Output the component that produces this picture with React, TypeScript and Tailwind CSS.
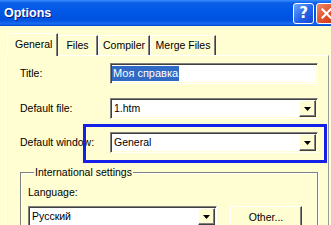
import React from "react";

const FACE = "bg-[#FFFDD2]";

function Arrow() {
  return (
    <svg width="7" height="4" viewBox="0 0 7 4" className="block">
      <path d="M0 0H7L3.5 4Z" fill="#000" />
    </svg>
  );
}

function Combo({ text, className }: { text: string; className: string }) {
  return (
    <div
      className={`${className} h-[21px] flex items-center bg-white border border-t-[#808080] border-l-[#808080] border-b-white border-r-white shadow-[inset_1px_1px_0_#404040,inset_-1px_-1px_0_#FFFDD2] pl-[2px] pr-px`}
    >
      <span className="flex-1 leading-[13px] pl-px">{text}</span>
      <div
        className={`w-[17px] h-[17px] ${FACE} flex items-center justify-center border border-t-white border-l-white border-b-[#404040] border-r-[#404040] shadow-[inset_-1px_-1px_0_#808080]`}
      >
        <Arrow />
      </div>
    </div>
  );
}

function Label({ children }: { children: React.ReactNode }) {
  return <div className="w-[90px] shrink-0 leading-[13px] whitespace-nowrap">{children}</div>;
}

export default function App() {
  return (
    <div
      className={`w-[331px] h-[225px] overflow-hidden ${FACE} font-['Liberation_Sans',Arial,sans-serif] text-[10.5px] text-black`}
    >
      <div className="w-[345px]">
        {/* Title bar */}
        <div className="h-[26px] flex items-center pl-[4px] pr-[8px] bg-[linear-gradient(to_bottom,#3a8cff_0px,#0a5ee8_3px,#0057e6_12px,#0052df_20px,#1a6cf2_24px,#0040c8_26px)]">
          <div className="flex-1 text-white font-bold text-[12.5px] leading-[16px] [text-shadow:1px_1px_0_#0a1a80]">
            Options
          </div>
          <div className="flex items-center gap-[2px]">
            <div className="w-[21px] h-[21px] rounded-[3px] border border-white bg-[linear-gradient(135deg,#6aa6ff,#2462ea_55%,#1448d0)] flex items-center justify-center text-white font-bold text-[15px] leading-none font-['DejaVu_Sans',sans-serif]">
              ?
            </div>
            <div className="w-[21px] h-[21px] rounded-[3px] border border-white bg-[linear-gradient(135deg,#f08a6a,#e0502c_55%,#c23a18)] flex items-center justify-center">
              <svg width="11" height="11" viewBox="0 0 11 11">
                <path d="M1.5 1.5L9.5 9.5M9.5 1.5L1.5 9.5" stroke="#fff" strokeWidth="2.2" strokeLinecap="square" />
              </svg>
            </div>
          </div>
        </div>

        <div className="pl-[5px] pt-[7px]">
          {/* Tabs */}
          <div className="flex items-end h-[22px] ml-[2px]">
            <div
              className={`relative z-10 -mb-px h-[23px] w-[51px] ${FACE} border-l border-t border-l-white border-t-white border-r border-r-[#404040] shadow-[inset_-1px_0_0_#808080] rounded-tl-[2px] pl-[7px] pt-[4px] leading-[13px]`}
            >
              General
            </div>
            <div className="h-[20px] w-[40px] border-t border-t-white border-r border-r-[#404040] shadow-[inset_-1px_0_0_#808080] flex items-center justify-center pb-[1px] leading-[13px]">
              Files
            </div>
            <div className="h-[20px] w-[52px] border-t border-l border-t-white border-l-white border-r border-r-[#404040] shadow-[inset_-1px_0_0_#808080] flex items-center justify-center pb-[1px] leading-[13px]">
              Compiler
            </div>
            <div className="h-[20px] w-[66px] border-t border-l border-t-white border-l-white border-r border-r-[#404040] shadow-[inset_-1px_0_0_#808080] flex items-center justify-center pb-[1px] leading-[13px]">
              Merge Files
            </div>
          </div>

          {/* Panel */}
          <div className="w-[324px] h-[200px] border-t border-l border-t-white border-l-white border-r border-r-[#9a9a9a] pl-[14px] pr-[10px]">
            <div className="mt-[7px] flex items-center">
              <Label>Title:</Label>
              <div className="w-[208px] h-[21px] flex items-center bg-white border border-t-[#808080] border-l-[#808080] border-b-white border-r-white shadow-[inset_1px_1px_0_#404040,inset_-1px_-1px_0_#FFFDD2] pl-[1px]">
                <span className="bg-[#316AC5] text-white text-[11px] leading-[15px] px-px">Моя справка</span>
              </div>
            </div>

            <div className="mt-[14px] flex items-center">
              <Label>Default file:</Label>
              <Combo text="1.htm" className="w-[208px]" />
            </div>

            <div className="relative mt-[13px] flex items-center">
              <Label>Default window:</Label>
              <Combo text="General" className="w-[208px]" />
              <div className="absolute left-[63px] top-[-8px] w-[244px] h-[39px] border-[3px] border-[#1420E8]" />
            </div>

            <fieldset className="mt-[13px] w-[298px] h-[80px] border border-[#808080] shadow-[inset_1px_1px_0_#fff,1px_1px_0_#fff] pl-[7px]">
              <legend className={`ml-[6px] px-px leading-[13px] ${FACE}`}>International settings</legend>
              <div className="mt-[7px] leading-[13px]">Language:</div>
              <div className="mt-[7px] flex items-start">
                <Combo text="Русский" className="w-[189px]" />
                <div className="ml-[13px] w-[72px] h-[23px] flex items-center justify-center border border-t-white border-l-white border-b-[#404040] border-r-[#404040] shadow-[inset_-1px_-1px_0_#808080] leading-[13px]">
                  Other...
                </div>
              </div>
            </fieldset>
          </div>
        </div>
      </div>
    </div>
  );
}
